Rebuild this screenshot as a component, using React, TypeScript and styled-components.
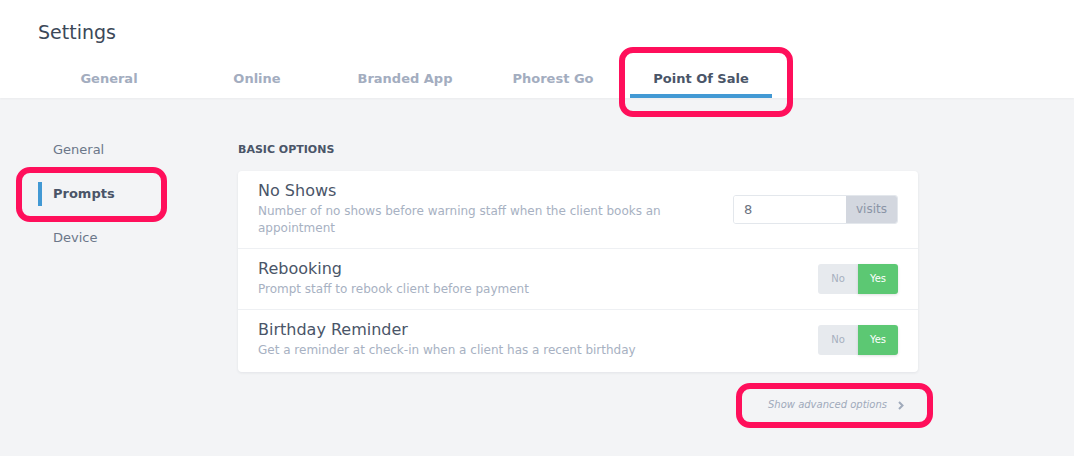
import * as React from 'react';
import styled, { createGlobalStyle } from 'styled-components';

const GlobalStyle = createGlobalStyle`
  html, body {
    margin: 0;
    padding: 0;
    background: #f3f4f6;
    font-family: 'DejaVu Sans', 'Open Sans', sans-serif;
  }
  * { box-sizing: border-box; }
`;

const Page = styled.div`
  position: relative;
  width: 1074px;
  min-height: 456px;
  background: #f3f4f6;
`;

const Header = styled.header`
  background: #ffffff;
  padding: 20px 0 0 38px;
  box-shadow: 0 1px 2px rgba(0, 0, 0, 0.04);
`;

const Title = styled.h1`
  margin: 0;
  font-size: 19px;
  line-height: 24px;
  font-weight: 500;
  color: #3c4858;
`;

const Tabs = styled.nav`
  display: flex;
  margin-left: -3px;
`;

const Tab = styled.div<{ $active?: boolean }>`
  width: 142px;
  height: 54px;
  margin: 0 3px;
  padding-top: 25px;
  text-align: center;
  font-size: 13px;
  line-height: 20px;
  font-weight: 700;
  color: ${(p) => (p.$active ? '#4a5568' : '#a3adbf')};
  border-bottom: 4px solid ${(p) => (p.$active ? '#4299d4' : 'transparent')};
`;

const Body = styled.div`
  display: flex;
`;

const Sidebar = styled.aside`
  width: 238px;
  padding: 30px 0 0 38px;
`;

const NavItem = styled.div`
  height: 44px;
  display: flex;
  align-items: center;
`;

const NavLink = styled.span<{ $active?: boolean }>`
  border-left: 4px solid ${(p) => (p.$active ? '#4299d4' : 'transparent')};
  padding-left: 11px;
  line-height: 24px;
  font-size: 13px;
  font-weight: ${(p) => (p.$active ? 700 : 400)};
  color: ${(p) => (p.$active ? '#4a5568' : '#6b7789')};
`;

const Main = styled.main`
  width: 680px;
  padding-top: 42px;
`;

const SectionLabel = styled.h2`
  margin: 0 0 11px;
  font-size: 11px;
  line-height: 20px;
  font-weight: 700;
  color: #4a5568;
`;

const Card = styled.section`
  background: #ffffff;
  border-radius: 4px;
  box-shadow: 0 1px 3px rgba(30, 40, 60, 0.08);
`;

const Row = styled.div`
  display: flex;
  align-items: center;
  justify-content: space-between;
  padding: 10px 20px 11px;
  & + & {
    border-top: 1px solid #eef0f3;
  }
  &:last-child {
    padding-bottom: 13px;
  }
`;

const RowText = styled.div`
  max-width: 430px;
`;

const RowTitle = styled.div`
  font-size: 16px;
  line-height: 20px;
  color: #4a5568;
  margin-bottom: 2px;
`;

const RowDesc = styled.div`
  font-size: 12px;
  line-height: 17px;
  color: #a7b1c2;
`;

const InputGroup = styled.div`
  display: flex;
  width: 165px;
  height: 29px;
  border: 1px solid #e3e7ec;
  border-radius: 3px;
  overflow: hidden;
`;

const NumberInput = styled.input`
  flex: 1;
  min-width: 0;
  border: none;
  outline: none;
  padding: 0 10px;
  font-family: inherit;
  font-size: 13px;
  color: #6b7280;
  background: #ffffff;
`;

const Addon = styled.span`
  width: 51px;
  display: flex;
  align-items: center;
  justify-content: center;
  background: #d3d7df;
  font-size: 12px;
  color: #8a94a6;
`;

const Toggle = styled.div`
  display: flex;
  height: 30px;
  border-radius: 3px;
`;

const ToggleOption = styled.span<{ $on?: boolean }>`
  width: 40px;
  display: flex;
  align-items: center;
  justify-content: center;
  font-size: 10px;
  border-radius: ${(p) => (p.$on ? '0 3px 3px 0' : '3px 0 0 3px')};
  background: ${(p) => (p.$on ? '#5cc873' : '#e7eaee')};
  color: ${(p) => (p.$on ? '#ffffff' : '#a6b0bf')};
  box-shadow: ${(p) => (p.$on ? '0 1px 3px rgba(0,0,0,0.12)' : 'none')};
`;

const AdvancedRow = styled.div`
  display: flex;
  justify-content: flex-end;
  margin-top: 25px;
  padding-right: 14px;
`;

const AdvancedLink = styled.a`
  display: flex;
  align-items: center;
  gap: 11px;
  font-size: 10px;
  line-height: 16px;
  font-style: italic;
  color: #a0aabb;
  cursor: pointer;
`;

const Highlight = styled.div<{ $x: number; $y: number; $w: number; $h: number }>`
  position: absolute;
  left: ${(p) => p.$x}px;
  top: ${(p) => p.$y}px;
  width: ${(p) => p.$w}px;
  height: ${(p) => p.$h}px;
  border: 6px solid #ff0f5b;
  border-radius: 14px;
  pointer-events: none;
`;

const tabs = ['General', 'Online', 'Branded App', 'Phorest Go', 'Point Of Sale'];
const navItems = ['General', 'Prompts', 'Device'];

function YesNo() {
  return (
    <Toggle>
      <ToggleOption>No</ToggleOption>
      <ToggleOption $on>Yes</ToggleOption>
    </Toggle>
  );
}

export default function App(): JSX.Element {
  return (
    <Page>
      <GlobalStyle />
      <Header>
        <Title>Settings</Title>
        <Tabs>
          {tabs.map((t) => (
            <Tab key={t} $active={t === 'Point Of Sale'}>
              {t}
            </Tab>
          ))}
        </Tabs>
      </Header>
      <Body>
        <Sidebar>
          {navItems.map((n) => (
            <NavItem key={n}>
              <NavLink $active={n === 'Prompts'}>{n}</NavLink>
            </NavItem>
          ))}
        </Sidebar>
        <Main>
          <SectionLabel>BASIC OPTIONS</SectionLabel>
          <Card>
            <Row>
              <RowText>
                <RowTitle>No Shows</RowTitle>
                <RowDesc>Number of no shows before warning staff when the client books an appointment</RowDesc>
              </RowText>
              <InputGroup>
                <NumberInput defaultValue="8" />
                <Addon>visits</Addon>
              </InputGroup>
            </Row>
            <Row>
              <RowText>
                <RowTitle>Rebooking</RowTitle>
                <RowDesc>Prompt staff to rebook client before payment</RowDesc>
              </RowText>
              <YesNo />
            </Row>
            <Row>
              <RowText>
                <RowTitle>Birthday Reminder</RowTitle>
                <RowDesc>Get a reminder at check-in when a client has a recent birthday</RowDesc>
              </RowText>
              <YesNo />
            </Row>
          </Card>
          <AdvancedRow>
            <AdvancedLink>
              Show advanced options
              <svg width="6" height="9" viewBox="0 0 6 9">
                <polyline points="1,1 4.5,4.5 1,8" fill="none" stroke="#a0aabb" strokeWidth="2" />
              </svg>
            </AdvancedLink>
          </AdvancedRow>
        </Main>
      </Body>
      <Highlight $x={619} $y={47} $w={174} $h={70} />
      <Highlight $x={16} $y={167} $w={151} $h={55} />
      <Highlight $x={736} $y={383} $w={197} $h={45} />
    </Page>
  );
}
